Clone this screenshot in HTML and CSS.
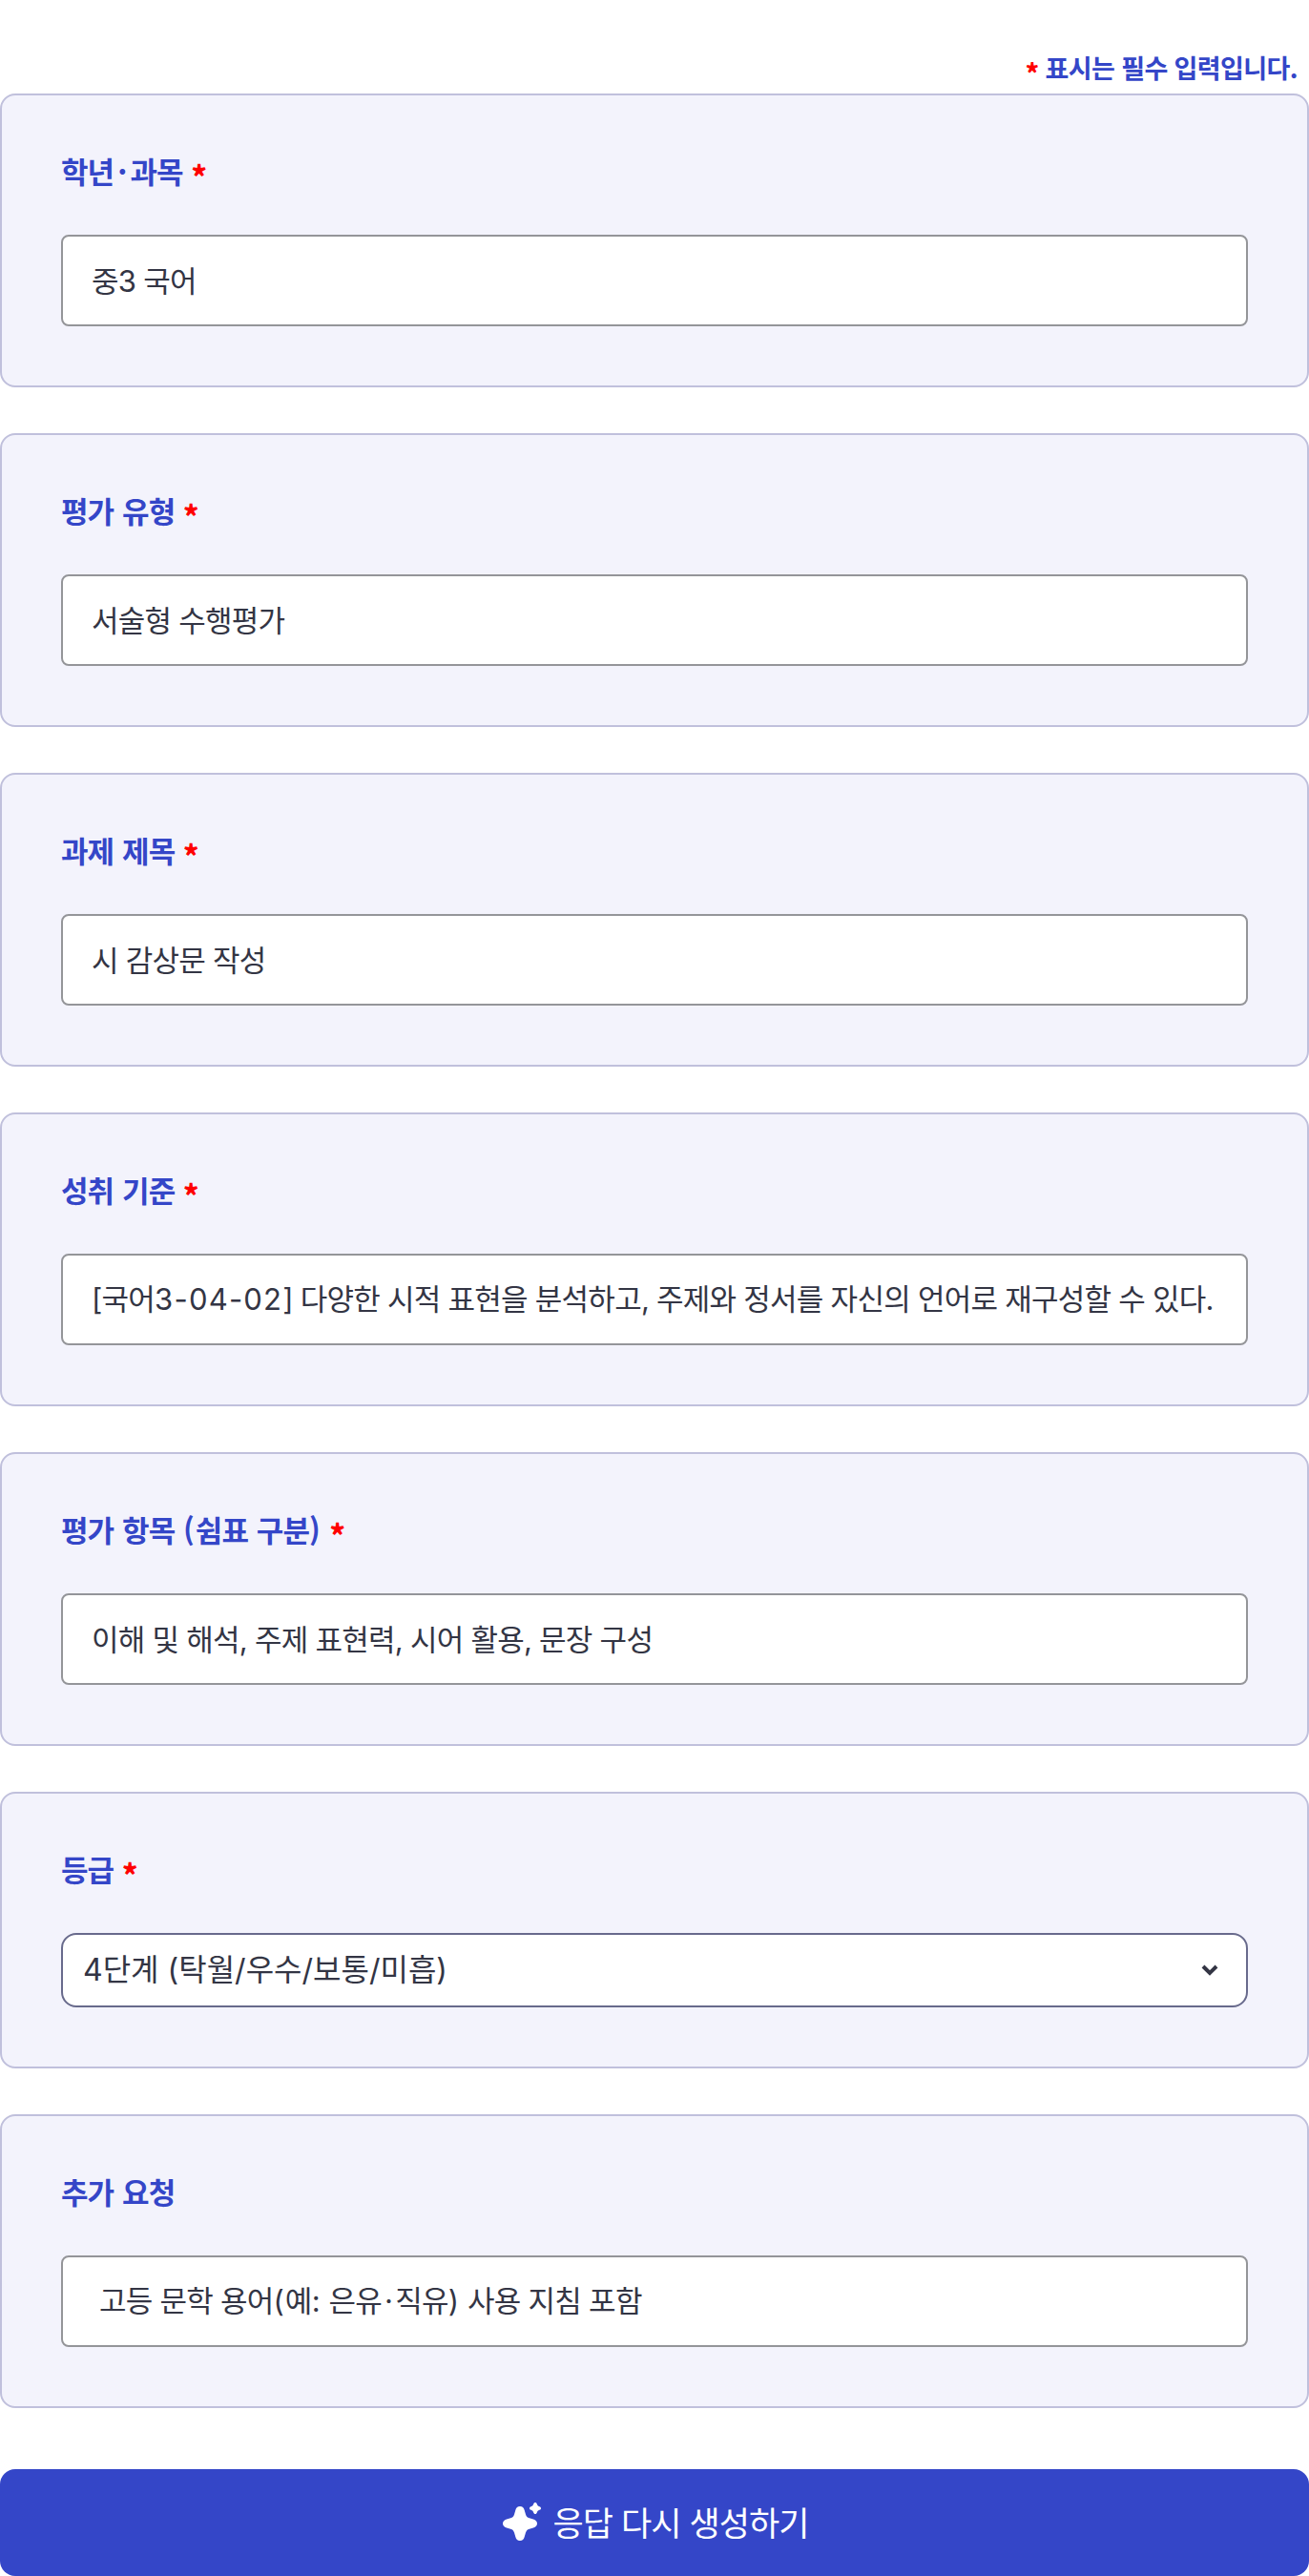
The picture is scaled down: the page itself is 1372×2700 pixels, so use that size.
FILE: index.html
```html
<!DOCTYPE html>
<html lang="ko">
<head>
    <meta charset="UTF-8">
    <title>수행평가 생성</title>
    <link rel="stylesheet" href="styles.css">
</head>
<body>
<form class="form" action="">
    <p class="notice"><span class="required">*</span> 표시는 필수 입력입니다.</p>

    <div class="cards">
        <div class="card">
            <label class="label" for="subject">학년<span class="dot">·</span>과목 <span class="required">*</span></label>
            <input class="input" id="subject" type="text" value="중3 국어">
        </div>
        <div class="card">
            <label class="label" for="type">평가 유형 <span class="required">*</span></label>
            <input class="input" id="type" type="text" value="서술형 수행평가">
        </div>
        <div class="card">
            <label class="label" for="title">과제 제목 <span class="required">*</span></label>
            <input class="input" id="title" type="text" value="시 감상문 작성">
        </div>
        <div class="card">
            <label class="label">성취 기준 <span class="required">*</span></label>
            <div class="input" id="standard" role="textbox" contenteditable="true" spellcheck="false">[국어<span class="code">3-04-02</span>] 다양한 시적 표현을 분석하고, 주제와 정서를 자신의 언어로 재구성할 수 있다.</div>
        </div>
        <div class="card">
            <label class="label" for="items">평가 항목 <span class="paren">(</span>쉼표 구분<span class="paren">)</span> <span class="required">*</span></label>
            <input class="input" id="items" type="text" value="이해 및 해석, 주제 표현력, 시어 활용, 문장 구성">
        </div>
        <div class="card">
            <label class="label" for="level">등급 <span class="required">*</span></label>
            <div class="select-box">
                <select class="select" id="level">
                    <option>4단계 (탁월/우수/보통/미흡)</option>
                </select>
                <svg class="chevron" viewBox="0 0 18 12" width="18" height="12"><path d="M2 2l7 7 7-7" fill="none" stroke="#333544" stroke-width="4"/></svg>
            </div>
        </div>
        <div class="card">
            <label class="label">추가 요청</label>
            <div class="input" id="extra" role="textbox" contenteditable="true" spellcheck="false"> 고등 문학 용어<span class="paren">(</span>예<span class="paren">:</span> 은유<span class="dot">·</span>직유<span class="paren">)</span> 사용 지침 포함</div>
        </div>
    </div>

    <button class="submit" type="button">
        <svg class="sparkle" viewBox="0 0 40 40" width="40" height="40" fill="#fff">
            <path d="M18 4c2.500 0 4 1.500 4.700 4l1.300 4.500c.8 2.200 1.600 3 3.800 3.800l4.200 1.300c2.500.7 4 2.200 4 4.400s-1.500 3.700-4 4.400l-4.200 1.300c-2.200.8-3 1.600-3.800 3.800L22.700 36c-.7 2.500-2.200 4-4.700 4s-4-1.500-4.700-4L12 31.500c-.8-2.200-1.600-3-3.800-3.800L4 26.400c-2.500-.7-4-2.200-4-4.400s1.500-3.700 4-4.400l4.200-1.300c2.200-.8 3-1.600 3.800-3.800L13.300 8C14 5.500 15.500 4 18 4z"/>
            <path d="M34 0c1 0 1.500.6 1.800 1.500.5 1.700 1 2.200 2.700 2.700.9.300 1.500.8 1.500 1.800s-.6 1.500-1.500 1.800c-1.700.5-2.200 1-2.700 2.700-.3.900-.8 1.500-1.800 1.500s-1.500-.6-1.800-1.500c-.5-1.700-1-2.200-2.700-2.700C28.600 7.500 28 7 28 6s.6-1.500 1.500-1.800c1.700-.5 2.200-1 2.700-2.700C32.500.6 33 0 34 0z"/>
        </svg>
        <span>응답 다시 생성하기</span>
    </button>
</form>
</body>
</html>
```
FILE: styles.css
```css
* { box-sizing: border-box; }
body { margin: 0; background: #fff; color: #333544; font-family: "Noto Sans CJK KR", sans-serif; }

.form { display: flex; flex-direction: column; padding-top: 45px; }
.notice { margin: 0; padding: 0 12px 0 0; height: 53px; line-height: 52px; text-align: right; font-size: 27px; font-weight: 700; letter-spacing: -0.6px; color: #3446c8; }
.required { color: #ff0000; font-weight: 900; line-height: 0; vertical-align: -5px; }

.cards { display: flex; flex-direction: column; gap: 48px; }
.card { display: flex; flex-direction: column; gap: 48px; padding: 62px; background: #f3f3fc; border: 2px solid #c0c0dc; border-radius: 16px; }
.label { height: 36px; line-height: 34px; font-size: 31px; font-weight: 700; letter-spacing: -0.9px; word-spacing: 1px; color: #3446c8; white-space: nowrap; }
.dot { margin: 0 4px; }
.paren { letter-spacing: 1px; }

.input { width: 100%; height: 96px; padding: 0 30px 3px; background: #fff; border: 2px solid #949599; border-radius: 8px; outline: none; font-family: Inter, "Noto Sans CJK KR", sans-serif; font-size: 31px; letter-spacing: -0.75px; line-height: 92px; color: #333544; white-space: pre; }
.input .dot { margin: 0 3px; }
.code { letter-spacing: 1.2px; }
.select-box { position: relative; height: 78px; }
.select { width: 100%; height: 78px; padding: 0 21px 1px; appearance: none; background: #fff; border: 2px solid #686a8c; border-radius: 16px; outline: none; font-family: Inter, "Noto Sans CJK KR", sans-serif; font-size: 32px; letter-spacing: 0; color: #333544; }
.chevron { position: absolute; top: 33px; right: 31px; }

.submit { display: flex; align-items: center; justify-content: center; gap: 12px; height: 112px; margin-top: 64px; padding: 0 0 3px 3px; background: #3446c8; border: none; border-radius: 16px; font-family: inherit; font-size: 35px; font-weight: 400; letter-spacing: -0.9px; color: #fff; }
```
